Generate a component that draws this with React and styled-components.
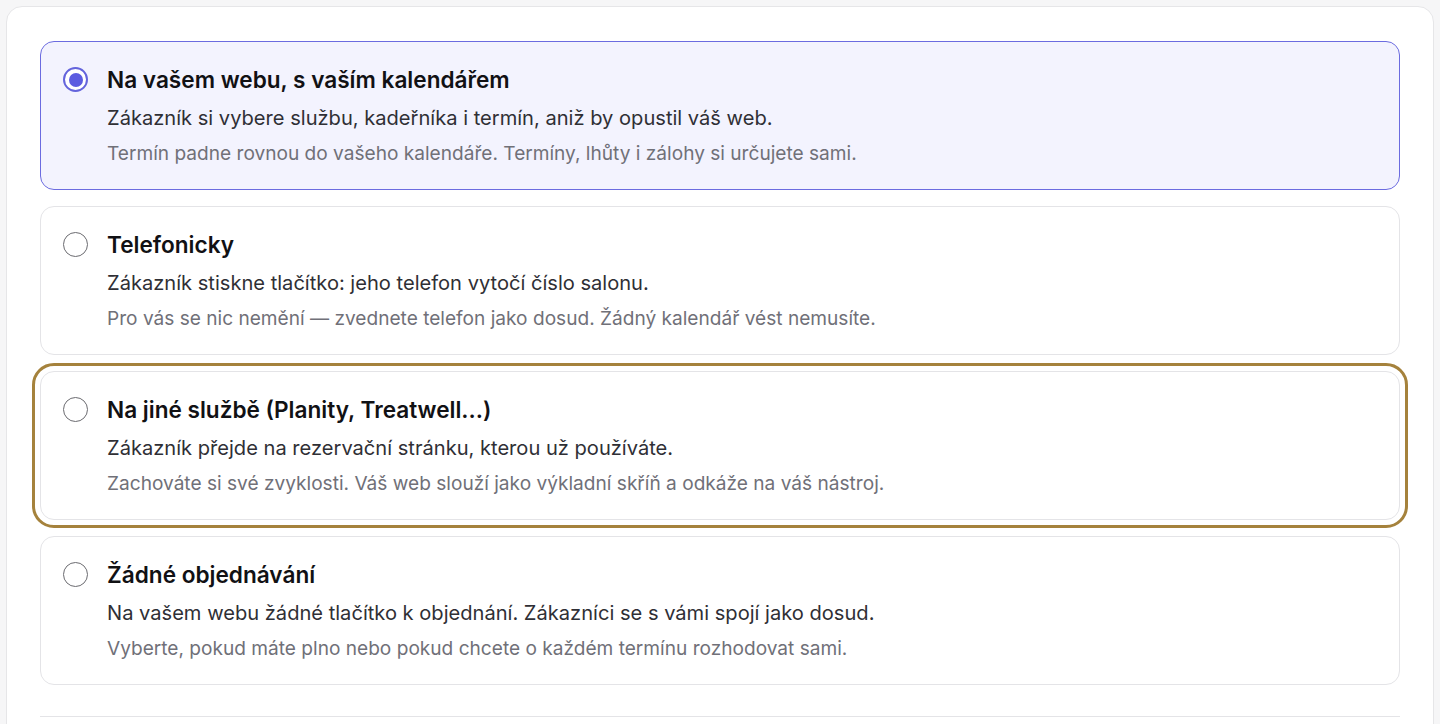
import React, { useState } from "react";
import styled, { createGlobalStyle, css } from "styled-components";

const Global = createGlobalStyle`
  * { box-sizing: border-box; }
  html, body { margin: 0; padding: 0; background: #f6f6f7; }
  body { font-family: Inter, "Noto Sans", sans-serif; -webkit-font-smoothing: antialiased; }
`;

const Page = styled.div`
  padding: 6px 6px 0 6px;
  height: 724px;
  overflow: hidden;
`;

const Card = styled.div`
  background: #ffffff;
  border: 1px solid #e6e6e8;
  border-radius: 16px;
  padding: 34px 33px 40px 33px;
  min-height: 760px;
`;

const List = styled.div`
  display: flex;
  flex-direction: column;
  gap: 16px;
`;

const Option = styled.label`
  display: flex;
  align-items: flex-start;
  gap: 19px;
  padding: 23px 22px 19px 22px;
  height: 149px;
  border-radius: 14px;
  border: 1.5px solid #e4e4e7;
  background: #ffffff;
  cursor: pointer;
  ${(p) =>
    p.$selected &&
    css`
      border-color: #6b6be0;
      background: #f3f3fe;
    `}
  ${(p) =>
    p.$focused &&
    css`
      outline: 3.5px solid #a5823c;
      outline-offset: 5.5px;
    `}
`;

const Radio = styled.span`
  flex: none;
  width: 25px;
  height: 25px;
  margin-top: 2px;
  border-radius: 50%;
  border: ${(p) => (p.$checked ? "2px solid #6464dc" : "1.5px solid #6b6b70")};
  display: flex;
  align-items: center;
  justify-content: center;
  background: #fff;
  &::after {
    content: "";
    width: 14px;
    height: 14px;
    border-radius: 50%;
    background: ${(p) => (p.$checked ? "#5c5ce0" : "transparent")};
  }
`;

const Body = styled.div`
  display: flex;
  flex-direction: column;
`;

const Title = styled.div`
  font-size: 22.6px;
  line-height: 30px;
  font-weight: 600;
  color: #111114;
`;

const Desc = styled.div`
  margin-top: 9px;
  font-size: 20.1px;
  line-height: 28px;
  color: #2f2f35;
`;

const Hint = styled.div`
  margin-top: 8px;
  font-size: 19.1px;
  line-height: 26px;
  color: #707078;
`;

const Divider = styled.div`
  margin-top: 31px;
  border-top: 1px solid #e4e4e7;
`;

const options = [
  {
    title: "Na vašem webu, s vaším kalendářem",
    desc: "Zákazník si vybere službu, kadeřníka i termín, aniž by opustil váš web.",
    hint: "Termín padne rovnou do vašeho kalendáře. Termíny, lhůty i zálohy si určujete sami.",
  },
  {
    title: "Telefonicky",
    desc: "Zákazník stiskne tlačítko: jeho telefon vytočí číslo salonu.",
    hint: "Pro vás se nic nemění — zvednete telefon jako dosud. Žádný kalendář vést nemusíte.",
  },
  {
    title: "Na jiné službě (Planity, Treatwell...)",
    desc: "Zákazník přejde na rezervační stránku, kterou už používáte.",
    hint: "Zachováte si své zvyklosti. Váš web slouží jako výkladní skříň a odkáže na váš nástroj.",
  },
  {
    title: "Žádné objednávání",
    desc: "Na vašem webu žádné tlačítko k objednání. Zákazníci se s vámi spojí jako dosud.",
    hint: "Vyberte, pokud máte plno nebo pokud chcete o každém termínu rozhodovat sami.",
  },
];

export default function App() {
  const [selected, setSelected] = useState(0);
  return (
    <Page>
      <Global />
      <Card>
        <List>
          {options.map((o, i) => (
            <Option
              key={i}
              $selected={selected === i}
              $focused={i === 2}
              onClick={() => setSelected(i)}
            >
              <Radio $checked={selected === i} />
              <Body>
                <Title>{o.title}</Title>
                <Desc>{o.desc}</Desc>
                <Hint>{o.hint}</Hint>
              </Body>
            </Option>
          ))}
        </List>
        <Divider />
      </Card>
    </Page>
  );
}
